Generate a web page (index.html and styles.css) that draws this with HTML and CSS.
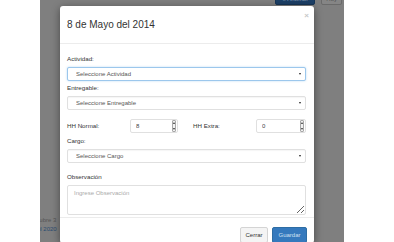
FILE: index.html
```html
<!DOCTYPE html>
<html lang="es">
<head>
    <meta charset="UTF-8">
    <meta name="viewport" content="width=device-width, initial-scale=1.0">
    <title>Registro de horas</title>
    <link rel="stylesheet" href="styles.css">
</head>
<body>
    <div class="screen">
        <!-- Pagina detras del modal -->
        <div class="page">
            <div class="page-nav">
                <button class="nav-btn nav-btn-primary">&laquo; Anterior</button>
                <button class="nav-btn">Hoy</button>
            </div>
            <div class="page-foot">
                <div class="foot-line">Octubre 3</div>
                <div class="foot-line foot-link">Jul 2020</div>
            </div>
        </div>

        <!-- Modal -->
        <div class="modal">
            <div class="modal-header">
                <h4 class="modal-title">8 de Mayo del 2014</h4>
                <span class="close">&times;</span>
            </div>
            <div class="modal-body">
                <div class="form-group gap-sm">
                    <label for="actividad">Actividad:</label>
                    <div class="select-wrap is-focus">
                        <select id="actividad"><option>Seleccione Actividad</option></select>
                    </div>
                </div>
                <div class="form-group gap-lg">
                    <label for="entregable">Entregable:</label>
                    <div class="select-wrap">
                        <select id="entregable"><option>Seleccione Entregable</option></select>
                    </div>
                </div>
                <div class="form-row gap-md">
                    <label for="hhNormal">HH Normal:</label>
                    <div class="spin-input">
                        <input type="text" id="hhNormal" value="8" spellcheck="false">
                        <span class="spinner"></span>
                    </div>
                    <label for="hhExtra" class="label-extra">HH Extra:</label>
                    <div class="spin-input">
                        <input type="text" id="hhExtra" value="0" spellcheck="false">
                        <span class="spinner"></span>
                    </div>
                </div>
                <div class="form-group gap-xl">
                    <label for="cargo">Cargo:</label>
                    <div class="select-wrap">
                        <select id="cargo"><option>Seleccione Cargo</option></select>
                    </div>
                </div>
                <div class="form-group">
                    <label for="observacion">Observación</label>
                    <textarea id="observacion" placeholder="Ingrese Observación"></textarea>
                </div>
            </div>
            <div class="modal-footer">
                <button class="btn">Cerrar</button>
                <button class="btn btn-primary">Guardar</button>
            </div>
        </div>
    </div>
</body>
</html>
```

FILE: styles.css
```css
body {
    margin: 0;
    background-color: #fff;
    font-family: "Liberation Sans", Arial, sans-serif;
    color: #333;
}
.screen {
    position: relative;
    margin-left: 40px;
    width: 304px;
    height: 242px;
    background-color: #7f7f7f;
    overflow: hidden;
}
.page {
    display: flex;
    flex-direction: column;
    justify-content: space-between;
    height: 100%;
}
.page-nav {
    display: flex;
    justify-content: flex-end;
    gap: 6px;
    padding-right: 2px;
    margin-top: -7px;
}
.nav-btn {
    height: 12px;
    padding: 0 4px;
    border: 1px solid #6a6a6a;
    border-radius: 2px;
    background-color: #858585;
    color: #555;
    font-family: inherit;
    font-size: 6px;
    line-height: 10px;
}
.nav-btn-primary {
    width: 40px;
    background-color: #1c3f66;
    border-color: #173556;
    color: #8aa0b8;
}
.page-foot {
    padding-bottom: 8px;
    font-size: 6px;
    line-height: 9px;
}
.foot-line {
    text-indent: -10px;
    color: #555;
}
.foot-link {
    text-indent: -6px;
    color: #2b4c70;
}
.modal {
    position: absolute;
    top: 6px;
    left: 20px;
    width: 254px;
    background-color: #fff;
    border-radius: 3px;
    box-shadow: 0 2px 8px rgba(0, 0, 0, 0.45);
}
.modal-header {
    display: flex;
    justify-content: space-between;
    align-items: center;
    box-sizing: border-box;
    height: 38px;
    padding: 0 7px 0 7px;
    border-bottom: 1px solid #ececec;
}
.modal-title {
    margin: 0;
    font-size: 10px;
    font-weight: normal;
    color: #333;
}
.close {
    align-self: flex-start;
    margin-top: 5px;
    margin-right: -2px;
    font-size: 8px;
    font-weight: bold;
    color: #c8c8c8;
}
.modal-body {
    padding: 11px 8px 2px 7px;
}
label {
    display: block;
    height: 8px;
    margin-bottom: 4px;
    font-size: 6.2px;
    line-height: 8px;
    color: #333;
}
.gap-sm { margin-bottom: 3px; }
.gap-md { margin-bottom: 4px; }
.gap-lg { margin-bottom: 9px; }
.gap-xl { margin-bottom: 10px; }
.select-wrap {
    position: relative;
}
.select-wrap::after {
    content: '';
    position: absolute;
    right: 5px;
    top: 6px;
    border-left: 1.5px solid transparent;
    border-right: 1.5px solid transparent;
    border-top: 2.5px solid #222;
}
select {
    display: block;
    width: 100%;
    height: 14px;
    padding: 0 8px;
    border: 1px solid #e0e0e0;
    border-radius: 2px;
    background-color: #fff;
    font-family: inherit;
    font-size: 6px;
    color: #555;
    -webkit-appearance: none;
    appearance: none;
    box-shadow: inset 0 1px 1px rgba(0, 0, 0, 0.04);
}
.is-focus select {
    border-color: #9cc7ec;
    box-shadow: 0 0 2px rgba(102, 175, 233, 0.5);
}
.form-row {
    display: grid;
    grid-template-columns: 63px 48px 1fr 50px;
    align-items: center;
}
.form-row label {
    margin-bottom: 0;
}
.label-extra {
    padding-left: 15px;
}
.spin-input {
    display: flex;
    align-items: center;
    box-sizing: border-box;
    height: 14px;
    padding-right: 1px;
    border: 1px solid #e0e0e0;
    border-radius: 2px;
}
.spin-input input {
    flex: 1;
    min-width: 0;
    height: 100%;
    padding: 0 5px;
    border: none;
    outline: none;
    background: transparent;
    font-family: inherit;
    font-size: 6px;
    color: #444;
}
.spinner {
    display: flex;
    flex-direction: column;
    justify-content: space-between;
    align-items: center;
    box-sizing: border-box;
    width: 4px;
    height: 12px;
    padding: 1px 0;
    border: 1px solid #a8a8a8;
    border-radius: 1px;
    background-color: #f2f2f2;
}
.spinner::before, .spinner::after {
    content: '';
    border-left: 1px solid transparent;
    border-right: 1px solid transparent;
}
.spinner::before {
    border-bottom: 2px solid #333;
}
.spinner::after {
    border-top: 2px solid #333;
}
textarea {
    display: block;
    box-sizing: border-box;
    width: 100%;
    height: 30px;
    padding: 4px 6px;
    border: 1px solid #e0e0e0;
    border-radius: 2px;
    font-family: inherit;
    font-size: 6px;
    color: #555;
    resize: vertical;
}
textarea::placeholder {
    color: #aaa;
}
.modal-footer {
    display: flex;
    justify-content: flex-end;
    gap: 4px;
    padding: 9px 7px 0;
    border-top: 1px solid #ececec;
}
.btn {
    width: 28px;
    height: 16px;
    padding: 0;
    border: 1px solid #d4d4d4;
    border-radius: 2px;
    background-color: #f4f4f4;
    font-family: inherit;
    font-size: 6px;
    color: #333;
}
.btn-primary {
    width: 35px;
    background-color: #3579bd;
    border-color: #2e6da4;
    color: #cfe0f1;
}
```
